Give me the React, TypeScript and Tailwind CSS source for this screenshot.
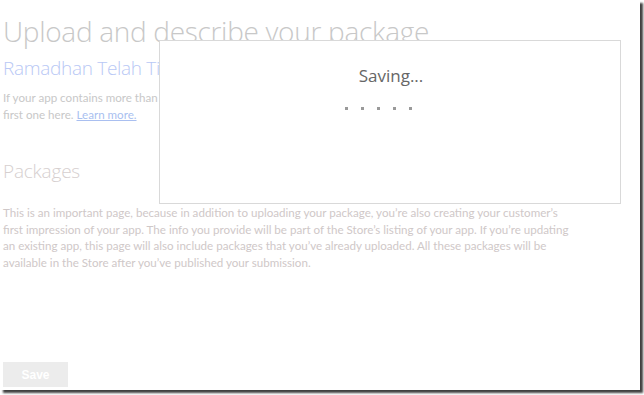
export default function App() {
  const sans = { fontFamily: '"Open Sans", "Noto Sans", sans-serif' };
  const body = { fontFamily: 'Lato, "Open Sans", sans-serif' };
  return (
    <div className="w-[644px] h-[395px] bg-white relative overflow-hidden">
      <div
        className="w-[640px] h-[390px] bg-white relative flex flex-col pl-[3px] shadow-[3px_3px_2px_rgba(0,0,0,0.75)]"
        style={sans}
      >
        <h1 className="mt-[13px] text-[28px] leading-[36px] font-light text-[#c8c8c8] tracking-[-0.3px] whitespace-nowrap">
          Upload and describe your package
        </h1>
        <div className="mt-[6px] text-[19px] leading-[26px] font-light text-[#b9c8f5] tracking-[-0.3px] whitespace-nowrap">
          Ramadhan Telah Tiba
        </div>
        <p className="mt-[8px] text-[11.6px] leading-[17px] text-[#c8c8c8] whitespace-nowrap" style={body}>
          If your app contains more than one package, you only need to upload the
          <br />
          first one here.{" "}
          <a className="underline text-[#a9bff0]">Learn more.</a>
        </p>
        <h2 className="mt-[35px] text-[19px] leading-[26px] font-light text-[#d6cfcf] tracking-[-0.2px] whitespace-nowrap">
          Packages
        </h2>
        <p className="mt-[21px] text-[11.6px] leading-[16.7px] text-[#cfc8c8] whitespace-nowrap" style={body}>
          This is an important page, because in addition to uploading your package, you’re also creating your customer’s
          <br />
          first impression of your app. The info you provide will be part of the Store’s listing of your app. If you’re updating
          <br />
          an existing app, this page will also include packages that you’ve already uploaded. All these packages will be
          <br />
          available in the Store after you’ve published your submission.
        </p>
        <div className="mt-auto mb-[3px]">
          <button
            className="w-[65px] h-[25px] bg-[#ececec] text-white text-[12px] font-bold"
            style={{ fontFamily: '"Liberation Sans", Arial, sans-serif' }}
          >
            Save
          </button>
        </div>

        <div className="absolute left-[159px] top-[40px] w-[462px] h-[164px] bg-white border border-[#d9d9d9] flex flex-col items-center">
          <div className="mt-[23px] pl-[2px] text-[17px] leading-[24px] text-[#666666]">
            Saving...
          </div>
          <div className="mt-[19px] flex gap-[13px] -ml-[24px]">
            <span className="w-[3px] h-[3px] bg-[#9a9a9a]" />
            <span className="w-[3px] h-[3px] bg-[#9a9a9a]" />
            <span className="w-[3px] h-[3px] bg-[#9a9a9a]" />
            <span className="w-[3px] h-[3px] bg-[#9a9a9a]" />
            <span className="w-[3px] h-[3px] bg-[#9a9a9a]" />
          </div>
        </div>
      </div>
    </div>
  );
}
